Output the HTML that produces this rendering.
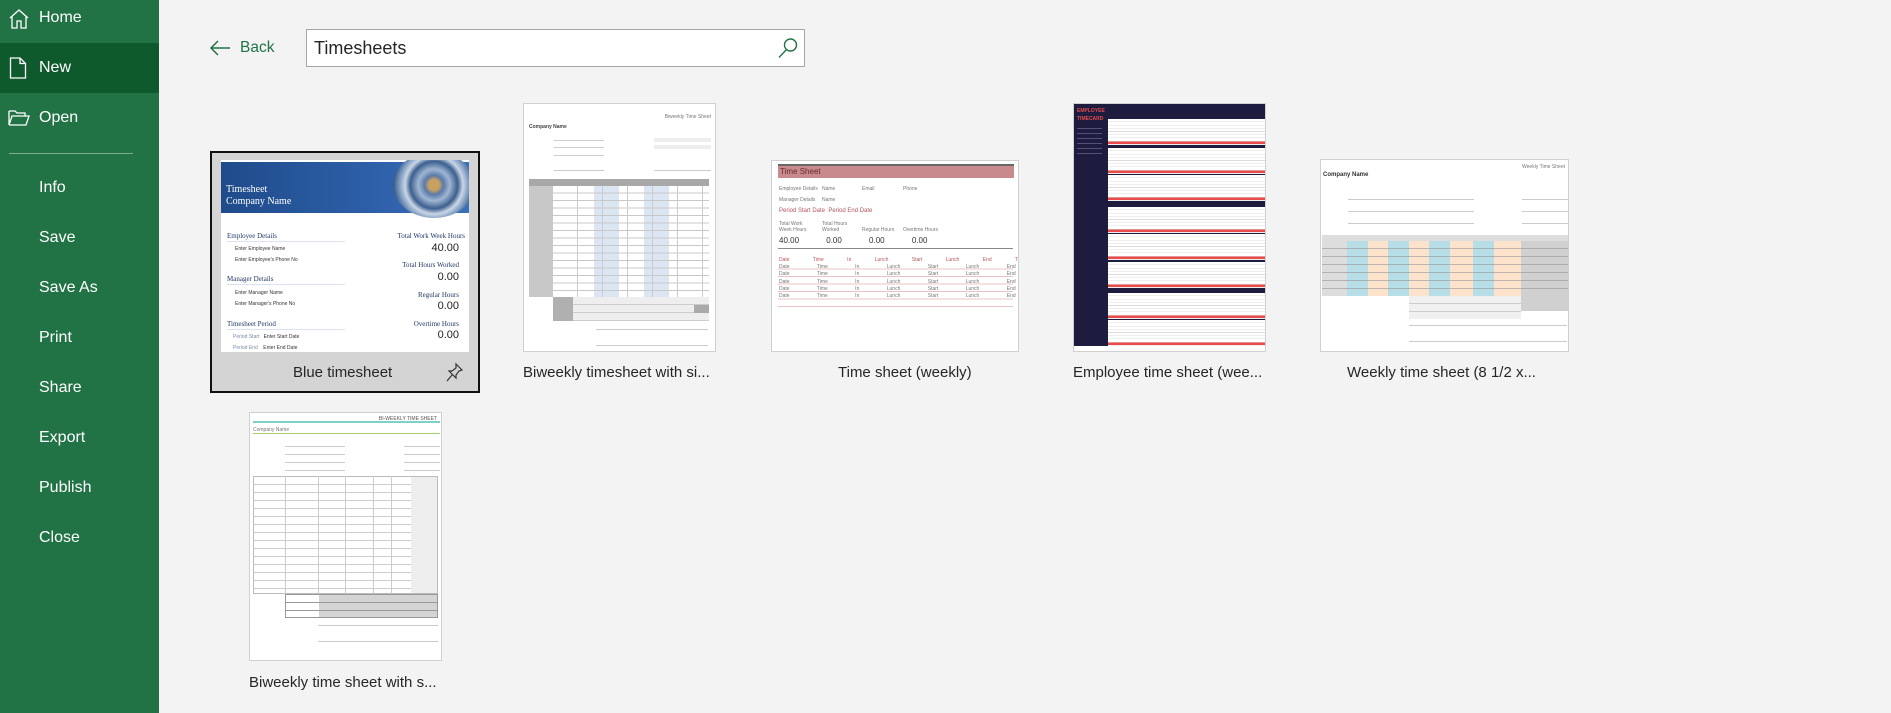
<!DOCTYPE html>
<html><head><meta charset="utf-8"><style>
*{margin:0;padding:0;box-sizing:border-box}
body{width:1891px;height:713px;overflow:hidden;background:#f3f3f3;font-family:"Liberation Sans",sans-serif;position:relative}
.side{position:absolute;left:0;top:0;width:159px;height:713px;background:#217346}
.sel{position:absolute;left:0;top:43px;width:159px;height:50px;background:#0e5a2d}
.nav{position:absolute;left:39px;color:#fff;font-size:16px;line-height:20px}
.sep{position:absolute;left:9px;top:153px;width:124px;height:1px;background:#7fae92}
.a{position:absolute}
.t{position:absolute;background:#fff;border:1px solid #d0d0d0;overflow:hidden}
.lbl{position:absolute;font-size:15px;color:#262626;line-height:20px;white-space:nowrap}
.s{position:absolute;font-size:5px;color:#777;white-space:nowrap;line-height:6px}
.ln{position:absolute;height:1px;background:#ccc}
.blk{position:absolute;left:34px;width:157px;height:26px;background:repeating-linear-gradient(180deg,transparent 0 2.6px,#ddd 2.6px 3.2px),linear-gradient(180deg,#fff 0 84%,#e94a4a 84% 96%,#fff 96%)}
</style></head><body>
<div class="side">
<div class="sel"></div>
<svg class="a" style="left:8px;top:8px" width="22" height="22" viewBox="0 0 22 22" fill="none" stroke="#fff" stroke-width="1.3"><path d="M2 10 L11 2 L20 10 M4 8 V20 H9 V13 H13 V20 H18 V8"/></svg>
<div class="nav" style="top:8px">Home</div>
<svg class="a" style="left:9px;top:57px" width="18" height="22" viewBox="0 0 18 22" fill="none" stroke="#fff" stroke-width="1.3"><path d="M1.5 1 H11 L16.5 6.5 V21 H1.5 Z M11 1 V6.5 H16.5"/></svg>
<div class="nav" style="top:58px">New</div>
<svg class="a" style="left:8px;top:109px" width="22" height="18" viewBox="0 0 22 18" fill="none" stroke="#fff" stroke-width="1.3"><path d="M1 2 H7 L9 4 H17 V7 M1 2 V16 L4 7 H21 L18 16 H1"/></svg>
<div class="nav" style="top:108px">Open</div>
<div class="sep"></div>
<div class="nav" style="top:178px">Info</div>
<div class="nav" style="top:228px">Save</div>
<div class="nav" style="top:278px">Save As</div>
<div class="nav" style="top:328px">Print</div>
<div class="nav" style="top:378px">Share</div>
<div class="nav" style="top:428px">Export</div>
<div class="nav" style="top:478px">Publish</div>
<div class="nav" style="top:528px">Close</div>
</div>

<svg class="a" style="left:209px;top:39px" width="22" height="18" viewBox="0 0 22 18" fill="none" stroke="#217346" stroke-width="1.5"><path d="M21 9 H2 M9 2 L2 9 L9 16"/></svg>
<div class="a" style="left:240px;top:39px;font-size:15.5px;color:#217346">Back</div>
<div class="a" style="left:306px;top:29px;width:499px;height:38px;background:#fff;border:1px solid #a6a6a6"></div>
<div class="a" style="left:314px;top:38px;font-size:18px;color:#262626">Timesheets</div>
<svg class="a" style="left:777px;top:37px" width="22" height="22" viewBox="0 0 22 22" fill="none" stroke="#217346" stroke-width="1.4"><circle cx="13.5" cy="8" r="6"/><path d="M9.5 12.5 L2 20.5"/></svg>

<!-- Card 1 selected -->
<div class="a" style="left:210px;top:151px;width:270px;height:242px;background:#d4d4d4;border:2px solid #111"></div>
<div class="t" style="left:221px;top:160px;width:248px;height:192px;border:none">
 <div class="a" style="left:0;top:2px;width:248px;height:51px;background:linear-gradient(90deg,#1f4b8a,#2d5fa8 60%,#3a70b8)"></div>
 <div class="a" style="left:172px;top:-8px;width:82px;height:66px;border-radius:50%;background:radial-gradient(circle,#c8a060 0 10%,#5a7aa8 18%,#9fb6d2 30%,#3c5f8e 45%,#c9d6e6 55%,#6f8fb8 68%,#2a4a78 80%)"></div>
 <div class="a" style="left:5px;top:24px;color:#fff;font-family:'Liberation Serif',serif;font-size:10px;line-height:12px">Timesheet<br>Company Name</div>
 <div class="a" style="left:6px;top:72px;font-family:'Liberation Serif',serif;font-size:7px;color:#1f3864;line-height:9px">Employee Details</div>
 <div class="ln" style="left:6px;top:81px;width:118px;background:#dde3ee"></div>
 <div class="s" style="left:14px;top:86px;color:#333">Enter Employee Name</div>
 <div class="s" style="left:14px;top:97px;color:#333">Enter Employee's Phone No</div>
 <div class="a" style="left:6px;top:115px;font-family:'Liberation Serif',serif;font-size:7px;color:#1f3864">Manager Details</div>
 <div class="ln" style="left:6px;top:124px;width:118px;background:#dde3ee"></div>
 <div class="s" style="left:14px;top:130px;color:#333">Enter Manager Name</div>
 <div class="s" style="left:14px;top:141px;color:#333">Enter Manager's Phone No</div>
 <div class="a" style="left:6px;top:160px;font-family:'Liberation Serif',serif;font-size:7px;color:#1f3864">Timesheet Period</div>
 <div class="ln" style="left:6px;top:169px;width:118px;background:#dde3ee"></div>
 <div class="s" style="left:12px;top:174px;color:#7a8aaa">Period Start &nbsp; <span style="color:#333">Enter Start Date</span></div>
 <div class="s" style="left:12px;top:185px;color:#7a8aaa">Period End &nbsp;&nbsp; <span style="color:#333">Enter End Date</span></div>
 <div class="a" style="right:4px;top:72px;text-align:right;font-family:'Liberation Serif',serif;font-size:7px;color:#1f3864;line-height:9px">Total Work Week Hours</div>
 <div class="a" style="right:10px;top:82px;font-size:11px;color:#222">40.00</div>
 <div class="a" style="right:10px;top:101px;font-family:'Liberation Serif',serif;font-size:7px;color:#1f3864">Total Hours Worked</div>
 <div class="a" style="right:10px;top:111px;font-size:11px;color:#222">0.00</div>
 <div class="a" style="right:10px;top:131px;font-family:'Liberation Serif',serif;font-size:7px;color:#1f3864">Regular Hours</div>
 <div class="a" style="right:10px;top:140px;font-size:11px;color:#222">0.00</div>
 <div class="a" style="right:10px;top:160px;font-family:'Liberation Serif',serif;font-size:7px;color:#1f3864">Overtime Hours</div>
 <div class="a" style="right:10px;top:169px;font-size:11px;color:#222">0.00</div>
</div>
<div class="lbl" style="left:293px;top:363px">Blue timesheet</div>
<svg class="a" style="left:446px;top:362px" width="18" height="20" viewBox="0 0 18 20" fill="none" stroke="#333" stroke-width="1.2"><path d="M10 2 L16 8 L13 9 L10 13 L10 16 L3 9 L6 9 L10 6 Z M6 13 L1 19"/></svg>

<!-- Card 2 -->
<div class="t" style="left:523px;top:103px;width:193px;height:249px">
 <div class="s" style="right:4px;top:10px">Biweekly Time Sheet</div>
 <div class="s" style="left:5px;top:20px;color:#444;font-weight:bold">Company Name</div>
 <div class="ln" style="left:30px;top:36px;width:50px"></div><div class="ln" style="left:30px;top:43px;width:50px"></div><div class="ln" style="left:30px;top:51px;width:50px"></div>
 <div class="ln" style="left:130px;top:34px;width:57px;height:4px;background:#eee"></div><div class="ln" style="left:130px;top:41px;width:57px;height:4px;background:#eee"></div>
 <div class="ln" style="left:30px;top:66px;width:50px"></div><div class="ln" style="left:130px;top:66px;width:57px"></div>
 <div class="a" style="left:5px;top:75px;width:180px;height:7px;background:#a8a8a8"></div>
 <div class="a" style="left:5px;top:82px;width:24px;height:111px;background:#c8c8c8"></div>
 <div class="a" style="left:70px;top:82px;width:25px;height:128px;background:#dce6f2"></div>
 <div class="a" style="left:120px;top:82px;width:25px;height:128px;background:#dce6f2"></div>
 <div class="a" style="left:29px;top:82px;width:156px;height:111px;background:repeating-linear-gradient(180deg,transparent 0 6.5px,#c8c8c8 6.5px 7.5px),repeating-linear-gradient(90deg,transparent 0 24px,#ccc 24px 25px)"></div>
 <div class="a" style="left:29px;top:193px;width:20px;height:24px;background:#b0b0b0"></div>
 <div class="a" style="left:49px;top:193px;width:136px;height:24px;background:repeating-linear-gradient(180deg,#eee 0 7px,#ccc 7px 8px)"></div>
 <div class="a" style="left:170px;top:201px;width:15px;height:8px;background:#aaa"></div>
 <div class="ln" style="left:72px;top:225px;width:112px"></div><div class="ln" style="left:72px;top:241px;width:112px"></div>
</div>
<div class="lbl" style="left:523px;top:363px">Biweekly timesheet with si...</div>

<!-- Card 3 -->
<div class="t" style="left:771px;top:160px;width:248px;height:192px">
 <div class="a" style="left:6px;top:3px;width:236px;height:2px;background:#666"></div>
 <div class="a" style="left:6px;top:5px;width:236px;height:12px;background:#c98a8e"></div>
 <div class="a" style="left:8px;top:6px;font-size:8px;color:#6a2a30">Time Sheet</div>
 <div class="s" style="left:7px;top:25px">Employee Details</div><div class="s" style="left:50px;top:25px">Name</div><div class="s" style="left:90px;top:25px">Email</div><div class="s" style="left:131px;top:25px">Phone</div>
 <div class="s" style="left:7px;top:36px">Manager Details</div><div class="s" style="left:50px;top:36px">Name</div>
 <div class="a" style="left:7px;top:47px;font-size:6px;color:#b5545c">Period Start Date &nbsp;Period End Date</div>
 <div class="s" style="left:7px;top:60px">Total Work<br>Week Hours</div><div class="s" style="left:50px;top:60px">Total Hours<br>Worked</div><div class="s" style="left:90px;top:66px">Regular Hours</div><div class="s" style="left:131px;top:66px">Overtime Hours</div>
 <div class="a" style="left:7px;top:75px;font-size:8px;color:#333;word-spacing:25px">40.00 0.00 0.00 0.00</div>
 <div class="a" style="left:6px;top:87px;width:235px;height:1px;background:#888"></div>
 <div class="a" style="left:6px;top:101px;width:235px;height:45px;background:repeating-linear-gradient(180deg,transparent 0 6.5px,#e8c4c7 6.5px 7.5px)"></div>
 <div class="s" style="left:7px;top:96px;color:#b5545c;word-spacing:22px">Date Time In Lunch Start Lunch End Time Out Hours Worked</div>
 <div class="s" style="left:7px;top:103px;line-height:7.3px;word-spacing:26px">Date Time In Lunch Start Lunch End Time Out 0.00<br>Date Time In Lunch Start Lunch End Time Out 0.00<br>Date Time In Lunch Start Lunch End Time Out 0.00<br>Date Time In Lunch Start Lunch End Time Out 0.00<br>Date Time In Lunch Start Lunch End Time Out 0.00</div>
</div>
<div class="lbl" style="left:838px;top:363px">Time sheet (weekly)</div>

<!-- Card 4 -->
<div class="t" style="left:1073px;top:103px;width:193px;height:249px;background:#fff">
 <div class="a" style="left:0;top:0;width:193px;height:242px;background:#1d1c3f"></div>
 <div class="a" style="left:3px;top:3px;font-size:5px;font-weight:bold;color:#e24b4b;line-height:8px">EMPLOYEE<br>TIMECARD</div>
 <div class="a" style="left:3px;top:24px;width:25px;height:30px;background:repeating-linear-gradient(180deg,#55507a 0 1px,transparent 1px 5px)"></div>
 <div class="blk" style="top:15px"></div>
 <div class="blk" style="top:44px"></div>
 <div class="blk" style="top:71px"></div>
 <div class="blk" style="top:103px"></div>
 <div class="blk" style="top:130px"></div>
 <div class="blk" style="top:158px"></div>
 <div class="blk" style="top:189px"></div>
 <div class="blk" style="top:216px"></div>
</div>
<div class="lbl" style="left:1073px;top:363px">Employee time sheet (wee...</div>

<!-- Card 5 -->
<div class="t" style="left:1320px;top:159px;width:249px;height:193px">
 <div class="s" style="right:3px;top:4px">Weekly Time Sheet</div>
 <div class="s" style="left:2px;top:12px;color:#333;font-weight:bold;font-size:6px">Company Name</div>
 <div class="a" style="left:27px;top:28px;width:126px;height:60px;background:repeating-linear-gradient(180deg,transparent 0 11px,#ccc 11px 12px)"></div>
 <div class="a" style="left:201px;top:28px;width:46px;height:60px;background:repeating-linear-gradient(180deg,transparent 0 11px,#ccc 11px 12px)"></div>
 <div class="a" style="left:1px;top:75px;width:247px;height:61px;background:#ddd"></div>
 <div class="a" style="left:26px;top:81px;width:21px;height:55px;background:#b7dde6"></div>
 <div class="a" style="left:47px;top:81px;width:20px;height:55px;background:#fde3cc"></div>
 <div class="a" style="left:67px;top:81px;width:21px;height:55px;background:#b7dde6"></div>
 <div class="a" style="left:88px;top:81px;width:20px;height:55px;background:#fde3cc"></div>
 <div class="a" style="left:108px;top:81px;width:21px;height:55px;background:#b7dde6"></div>
 <div class="a" style="left:129px;top:81px;width:23px;height:55px;background:#fde3cc"></div>
 <div class="a" style="left:152px;top:81px;width:21px;height:55px;background:#b7dde6"></div>
 <div class="a" style="left:173px;top:81px;width:27px;height:55px;background:#fde3cc"></div>
 <div class="a" style="left:200px;top:81px;width:48px;height:55px;background:#d0d0d0"></div>
 <div class="a" style="left:1px;top:81px;width:247px;height:55px;background:repeating-linear-gradient(180deg,transparent 0 7px,rgba(150,150,150,.6) 7px 8px)"></div>
 <div class="a" style="left:88px;top:136px;width:112px;height:23px;background:repeating-linear-gradient(180deg,#f0f0f0 0 7px,#ccc 7px 8px)"></div>
 <div class="a" style="left:200px;top:136px;width:48px;height:15px;background:#d0d0d0"></div>
 <div class="ln" style="left:88px;top:165px;width:158px"></div><div class="ln" style="left:88px;top:181px;width:158px"></div>
</div>
<div class="lbl" style="left:1347px;top:363px">Weekly time sheet (8 1/2 x...</div>

<!-- Card 6 -->
<div class="t" style="left:249px;top:412px;width:193px;height:249px">
 <div class="s" style="right:4px;top:3px;color:#555">BI-WEEKLY TIME SHEET</div>
 <div class="a" style="left:3px;top:8px;width:187px;height:2px;background:#7fd0c8"></div>
 <div class="s" style="left:3px;top:14px">Company Name</div>
 <div class="a" style="left:3px;top:20px;width:187px;height:1px;background:#a6cf6a"></div>
 <div class="a" style="left:35px;top:26px;width:60px;height:34px;background:repeating-linear-gradient(180deg,transparent 0 7px,#ccc 7px 8px)"></div>
 <div class="a" style="left:154px;top:26px;width:36px;height:34px;background:repeating-linear-gradient(180deg,transparent 0 7px,#ccc 7px 8px)"></div>
 <div class="a" style="left:3px;top:63px;width:185px;height:118px;border:1px solid #bbb;background:linear-gradient(90deg,transparent 157px,#eee 157px),repeating-linear-gradient(180deg,transparent 0 7px,#ccc 7px 8px)"></div>
 <div class="a" style="left:35px;top:63px;width:125px;height:118px;background:linear-gradient(90deg,#ccc 0 1px,transparent 1px 33px,#ccc 33px 34px,transparent 34px 60px,#ccc 60px 61px,transparent 61px 88px,#ccc 88px 89px,transparent 89px 106px,#ccc 106px 107px,transparent 107px)"></div>
 <div class="a" style="left:35px;top:181px;width:153px;height:24px;border:1px solid #999;background:repeating-linear-gradient(180deg,transparent 0 7px,#999 7px 8px),linear-gradient(90deg,#fff 33px,#d4d4d4 33px)"></div>
 <div class="ln" style="left:68px;top:212px;width:120px"></div><div class="ln" style="left:68px;top:228px;width:120px"></div>
</div>
<div class="lbl" style="left:249px;top:673px">Biweekly time sheet with s...</div>
</body></html>
